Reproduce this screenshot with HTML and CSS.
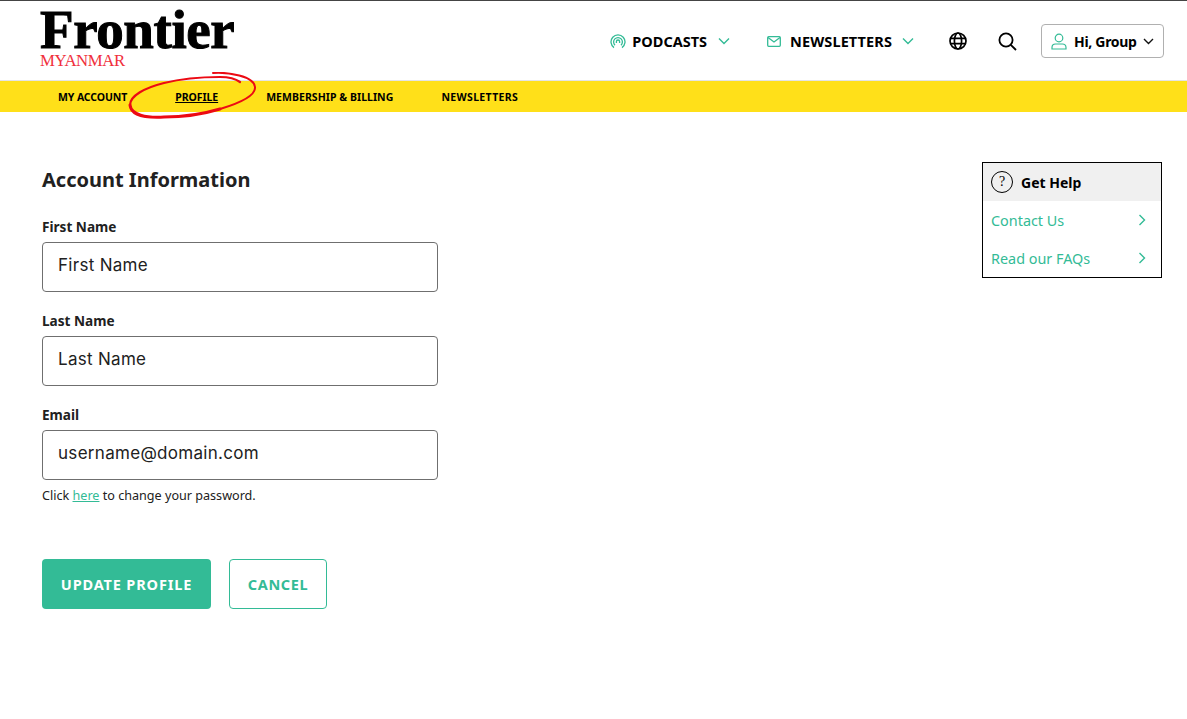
FILE: index.html
```html
<!DOCTYPE html>
<html lang="en">
<head>
<meta charset="utf-8">
<title>Frontier Myanmar - Profile</title>
<link rel="stylesheet" href="styles.css">
</head>
<body>
<header class="header">
  <a class="logo" href="#">
    <span class="logo-main">Frontier</span>
    <span class="logo-sub">MYANMAR</span>
  </a>
  <div class="tools">
    <a class="tool tool-pod" href="#">
      <svg class="ic-pod" width="16" height="16" viewBox="0 0 16 16" fill="none" stroke="#33bb96" stroke-width="1.3"><path d="M4 14.6A7 7 0 1 1 12 14.6"/><path d="M5 12.2A4.4 4.4 0 1 1 11 12.2"/><path d="M6.400 10V8.600a1.600 1.600 0 0 1 3.200 0V10"/></svg>
      <span>PODCASTS</span>
      <svg class="chev" width="12" height="8" viewBox="0 0 12 8" fill="none" stroke="#33bb96" stroke-width="1.4"><path d="M1 1.500l5 5 5-5"/></svg>
    </a>
    <a class="tool tool-news" href="#">
      <svg class="ic-mail" width="14" height="11" viewBox="0 0 14 11" fill="none" stroke="#33bb96" stroke-width="1.3"><rect x=".7" y=".7" width="12.6" height="9.6" rx="1"/><path d="M1 1.500l6 4.500 6-4.500"/></svg>
      <span>NEWSLETTERS</span>
      <svg class="chev" width="12" height="8" viewBox="0 0 12 8" fill="none" stroke="#33bb96" stroke-width="1.4"><path d="M1 1.500l5 5 5-5"/></svg>
    </a>
    <svg class="ic-globe" width="18" height="18" viewBox="0 0 18 18" fill="none" stroke="#000" stroke-width="1.7"><circle cx="9" cy="9" r="8"/><ellipse cx="9" cy="9" rx="3.600" ry="8"/><path d="M1.200 6.400h15.600M1.200 11.600h15.600"/></svg>
    <svg class="ic-search" width="19" height="19" viewBox="0 0 19 19" fill="none" stroke="#000" stroke-width="1.8"><circle cx="8" cy="8" r="6.600"/><path d="M12.800 12.800l5.200 5.200"/></svg>
    <button class="user" type="button">
      <svg width="16" height="17" viewBox="0 0 16 17" fill="none" stroke="#33bb96" stroke-width="1.2"><circle cx="8" cy="5" r="3.800"/><path d="M1 16v-1.500A3.500 3.500 0 0 1 4.500 11h7a3.500 3.500 0 0 1 3.500 3.500V16z"/></svg>
      <span>Hi, Group</span>
      <svg width="11" height="7" viewBox="0 0 11 7" fill="none" stroke="#111" stroke-width="1.4"><path d="M1 1l4.500 4.500L10 1"/></svg>
    </button>
  </div>
</header>

<nav class="subnav">
  <a href="#">MY ACCOUNT</a>
  <a class="active" href="#">PROFILE</a>
  <a class="wide" href="#">MEMBERSHIP &amp; BILLING</a>
  <a class="wider" href="#">NEWSLETTERS</a>
  <svg class="circle" width="132" height="50" viewBox="0 0 132 50" fill="none" stroke="#ec0a13" stroke-linecap="round">
    <path stroke-width="2.000" d="M85 1C100 0 126 4 127 15C128 24 112 31 92 37"/>
    <path stroke-width="3.000" d="M92 37C72 43 52 45 36 45C18 46 3 43 2 33"/>
    <path stroke-width="2.200" d="M2 33C2 24 16 16 36 11C56 6 76 5 92 5C102 5 108 7 112 10"/>
  </svg>
</nav>

<main class="main">
  <form class="form">
    <h1>Account Information</h1>
    <label class="field"><span>First Name</span><input type="text" placeholder="First Name"></label>
    <label class="field"><span>Last Name</span><input type="text" placeholder="Last Name"></label>
    <label class="field"><span>Email</span><input type="text" placeholder="username@domain.com"></label>
    <p class="hint">Click <a href="#">here</a> to change your password.</p>
    <div class="actions">
      <button class="btn btn-primary" type="button">UPDATE PROFILE</button>
      <button class="btn btn-ghost" type="button">CANCEL</button>
    </div>
  </form>
  <aside class="help">
    <div class="help-head">
      <span class="q">?</span>
      <strong>Get Help</strong>
    </div>
    <a class="help-row" href="#"><span>Contact Us</span><svg width="8" height="12" viewBox="0 0 8 12" fill="none" stroke="#33bb96" stroke-width="1.4"><path d="M1.500 1l5 5-5 5"/></svg></a>
    <a class="help-row" href="#"><span>Read our FAQs</span><svg width="8" height="12" viewBox="0 0 8 12" fill="none" stroke="#33bb96" stroke-width="1.4"><path d="M1.500 1l5 5-5 5"/></svg></a>
  </aside>
</main>
</body>
</html>
```
FILE: styles.css
```css
* { box-sizing: border-box; }
html, body { margin: 0; padding: 0; }
body {
  height: 719px;
  overflow: hidden;
  background: #fff;
  color: #212121;
  font-family: "Noto Sans", "Open Sans", sans-serif;
  border-top: 1px solid #444;
}
a { text-decoration: none; color: inherit; }

.header {
  height: 79px;
  display: flex;
  align-items: flex-start;
  justify-content: space-between;
  padding: 0 23px 0 40px;
}
.logo { display: flex; flex-direction: column; }
.logo-main {
  font-family: "Liberation Serif", serif;
  font-weight: 700;
  font-size: 55px;
  line-height: 44px;
  margin-top: 7px;
  letter-spacing: -.4px;
  color: #000;
  -webkit-text-stroke: 1px #000;
}
.logo-sub {
  font-family: "Liberation Serif", serif;
  font-size: 16.800px;
  line-height: 16px;
  margin-top: 1px;
  color: #f0303c;
  letter-spacing: -.4px;
}
.tools { display: flex; align-items: center; height: 80px; }
.tool {
  display: flex;
  align-items: center;
  font-weight: 700;
  font-size: 14.500px;
  color: #000;
}
.tool span { margin: 0 11px 0 6px; }
.tool-news { margin-left: 37px; }
.tool-news span { margin: 0 10px 0 9px; letter-spacing: .1px; }
.ic-globe { margin-left: 35px; }
.ic-search { margin-left: 31px; }
.user {
  margin-left: 24px;
  width: 123px;
  height: 34px;
  display: flex;
  align-items: center;
  padding: 0 0 0 9px;
  background: #fff;
  border: 1px solid #b0b0b0;
  border-radius: 4px;
  font: 700 14px "Noto Sans", sans-serif;
  letter-spacing: -.3px;
  color: #000;
}
.user span { margin: 0 6px 0 7px; }

.subnav {
  position: relative;
  height: 32px;
  display: flex;
  align-items: center;
  gap: 48px;
  padding: 0 0 0 58px;
  background: #ffe019;
  border-top: 1px solid #e4e4e4;
  font-weight: 700;
  font-size: 10.500px;
  color: #000;
  letter-spacing: -.1px;
}
.subnav .active { text-decoration: underline; letter-spacing: -.05px; }
.subnav .wide { letter-spacing: .05px; }
.subnav .wider { letter-spacing: .35px; }
.circle { position: absolute; left: 128px; top: -9px; }

.main {
  display: flex;
  justify-content: space-between;
  align-items: flex-start;
  padding: 50px 25px 0 42px;
}
.form { width: 396px; }
.form h1 {
  margin: 0;
  font-size: 20px;
  line-height: 36px;
  font-weight: 700;
}
.field { display: block; margin-top: 17px; }
.field span {
  display: block;
  font-size: 13.600px;
  font-weight: 700;
  line-height: 22px;
  margin-bottom: 5px;
  position: relative;
  top: 1px;
}
.field input {
  display: block;
  width: 100%;
  height: 50px;
  padding: 0 15px 4px;
  border: 1px solid #6f6f6f;
  border-radius: 4px;
  background: #fff;
  font: 400 17px Inter, sans-serif;
  letter-spacing: .3px;
}
.field input::placeholder { color: #212121; opacity: 1; }
.hint {
  margin: 7px 0 0;
  font-size: 12.600px;
  line-height: 18px;
}
.hint a { color: #33bb96; text-decoration: underline; }
.actions { display: flex; gap: 18px; margin-top: 54px; }
.btn {
  height: 50px;
  border-radius: 4px;
  font: 700 14.500px "Noto Sans", sans-serif;
  letter-spacing: .85px;
}
.btn-primary { width: 169px; background: #33bb96; border: 0; color: #fff; }
.btn-ghost { width: 98px; background: #fff; border: 1px solid #33bb96; color: #33bb96; letter-spacing: .6px; }

.help {
  width: 180px;
  height: 116px;
  border: 1px solid #000;
}
.help-head {
  height: 38px;
  display: flex;
  align-items: center;
  gap: 8px;
  padding-left: 8px;
  background: #f0f0f0;
  font-size: 14px;
  color: #000;
}
.q {
  width: 22px;
  height: 22px;
  border: 1px solid #000;
  border-radius: 50%;
  display: flex;
  align-items: center;
  justify-content: center;
  font: 400 14px "Liberation Serif", serif;
}
.help-row {
  height: 38px;
  display: flex;
  align-items: center;
  justify-content: space-between;
  padding: 0 15px 0 8px;
  font-size: 14.400px;
  color: #33bb96;
}
```
